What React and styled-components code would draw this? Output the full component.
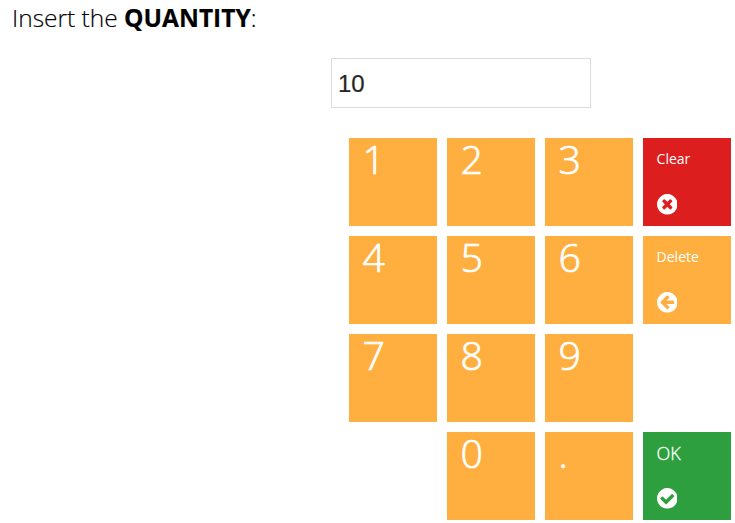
import React from "react";
import styled, { createGlobalStyle } from "styled-components";

const Global = createGlobalStyle`
  * { box-sizing: border-box; }
  body { margin: 0; background: #fff; overflow: hidden; font-family: "Open Sans", sans-serif; }
`;
const Page = styled.main`
  width: 735px; height: 523px; display: flex; flex-direction: column; overflow: hidden;
`;
const Heading = styled.h1`
  margin: 0; padding-left: 12px; height: 58px; font-size: 24.5px; line-height: 35px;
  font-weight: 300; color: #000; white-space: nowrap; -webkit-text-stroke: 0.15px #000;
  strong { font-weight: 700; }
`;
const Field = styled.input`
  width: 260px; height: 50px; margin: 0 0 30px 331px; padding: 1px 6px 0; border: 1px solid #dcdcdc;
  border-radius: 0; outline: 0; font: 24px "Liberation Sans", sans-serif; color: #262626;
  -webkit-text-stroke: 0.2px #262626;
`;
const Keypad = styled.div`
  display: grid; grid-template-columns: repeat(4, 88px); grid-auto-rows: 88px; gap: 10px; margin-left: 349px;
`;
const Key = styled.button`
  grid-column: ${(p) => p.$column}; grid-row: ${(p) => p.$row};
  border: 0; padding: 0 0 0 13.4px; background: #ffaf40; color: #fff; text-align: left;
  display: flex; align-items: flex-start; font: 300 39.4px/42px "Open Sans", sans-serif;
  -webkit-text-stroke: 0.7px #fff;
`;
const ActionKey = styled(Key)`
  flex-direction: column; justify-content: space-between; padding: 10px 13px 11.4px 13.6px;
  background: ${(p) => p.$color}; font-size: ${(p) => p.$size}px; line-height: 22px;
  font-weight: ${(p) => p.$weight};
  -webkit-text-stroke: ${(p) => (p.$weight === 300 ? "0.3px #fff" : "0")};
`;
const Icon = styled.svg`
  width: 20.6px; height: 20.6px; display: block; fill: currentColor;
`;

const disc = "q0 209-103 385.5t-279.5 279.5-385.5 103-385.5-103-279.5-279.5-103-385.5 103-385.5 279.5-279.5 385.5-103 385.5 103 279.5 279.5 103 385.5z";
const icons = {
  clear: "M1277 1122q0-26-19-45l-181-181 181-181q19-19 19-45 0-27-19-46l-90-90q-19-19-46-19-26 0-45 19l-181 181-181-181q-19-19-45-19-27 0-46 19l-90 90q-19 19-19 46 0 26 19 45l181 181-181 181q-19 19-19 45 0 27 19 46l90 90q19 19 46 19 26 0 45-19l181-181 181 181q19 19 45 19 27 0 46-19l90-90q19-19 19-46zm387-226" + disc,
  back: "M1408 960v-128q0-26-19-45t-45-19h-502l189-189q19-19 19-45t-19-45l-91-91q-18-18-45-18t-45 18l-362 362-91 91q-18 18-18 45t18 45l91 91 362 362q18 18 45 18t45-18l91-91q18-18 18-45t-18-45l-189-189h502q26 0 45-19t19-45zm256-64" + disc,
  check: "M1412 734q0-28-18-46l-91-90q-19-19-45-19t-45 19l-408 407-226-226q-19-19-45-19t-45 19l-91 90q-18 18-18 46 0 27 18 45l362 362q19 19 45 19 27 0 46-19l543-543q18-18 18-45zm252 162" + disc,
};
const KeyIcon = ({ name }) => (
  <Icon viewBox="128 128 1536 1536" aria-hidden="true"><path d={icons[name]} /></Icon>
);
const digits = ["1", "2", "3", "4", "5", "6", "7", "8", "9"];

export default function App() {
  return (
    <Page>
      <Global />
      <Heading>Insert the <strong>QUANTITY</strong>:</Heading>
      <Field defaultValue="10" aria-label="Quantity" />
      <Keypad>
        {digits.map((d, i) => (
          <Key key={d} $column={(i % 3) + 1} $row={Math.floor(i / 3) + 1}>{d}</Key>
        ))}
        <Key $column={2} $row={4}>0</Key>
        <Key $column={3} $row={4}>.</Key>
        <ActionKey $column={4} $row={1} $color="#dc1e1e" $size={14} $weight={400}>Clear<KeyIcon name="clear" /></ActionKey>
        <ActionKey $column={4} $row={2} $color="#ffaf40" $size={14} $weight={400}>Delete<KeyIcon name="back" /></ActionKey>
        <ActionKey $column={4} $row={4} $color="#2e9f3e" $size={18} $weight={300}>OK<KeyIcon name="check" /></ActionKey>
      </Keypad>
    </Page>
  );
}
